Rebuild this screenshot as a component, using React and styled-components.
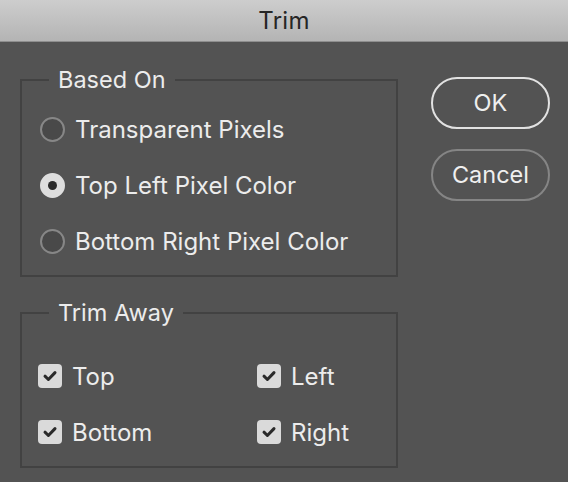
import React from "react";
import styled, { createGlobalStyle } from "styled-components";

const GlobalStyle = createGlobalStyle`
  html, body {
    margin: 0;
    padding: 0;
    background: #535353;
  }
  body {
    font-family: Inter, "Noto Sans", "Liberation Sans", sans-serif;
    color: #ececec;
  }
`;

const Dialog = styled.div`
  width: 568px;
  height: 482px;
  background: #535353;
  overflow: hidden;
`;

const TitleBar = styled.div`
  height: 41px;
  display: flex;
  align-items: center;
  justify-content: center;
  background: linear-gradient(#cdcdcd, #b4b4b4);
  border-bottom: 1px solid #8e8e8e;
  color: #262626;
  font-size: 24px;
  letter-spacing: 0.3px;
`;

const Body = styled.div`
  display: flex;
  gap: 33px;
  padding: 26px 0 0 20px;
`;

const Column = styled.div`
  display: flex;
  flex-direction: column;
  gap: 24px;
  width: 378px;
`;

const Group = styled.fieldset`
  margin: 0;
  padding: 0 0 ${(p) => p.$bottom || 6}px 18px;
  border: 2px solid #424242;
  min-width: 0;
`;

const Legend = styled.legend`
  margin-left: 9px;
  padding: 0 9px;
  font-size: 23.5px;
  line-height: 24px;
  color: #ececec;
`;

const Options = styled.div`
  padding-top: 9px;
`;

const Row = styled.label`
  display: flex;
  align-items: center;
  gap: 10px;
  height: 56px;
  font-size: 24px;
  white-space: nowrap;
`;

const Radio = styled.span`
  box-sizing: border-box;
  flex: none;
  width: 25px;
  height: 25px;
  border-radius: 50%;
  display: flex;
  align-items: center;
  justify-content: center;
  border: 2px solid ${(p) => (p.$on ? "#dedede" : "#878787")};
  background: ${(p) => (p.$on ? "#dedede" : "#494949")};

  &::after {
    content: "";
    display: ${(p) => (p.$on ? "block" : "none")};
    width: 9px;
    height: 9px;
    border-radius: 50%;
    background: #2b2b2b;
  }
`;

const CheckGrid = styled.div`
  display: grid;
  grid-template-columns: 219px 1fr;
  padding-top: 23px;
  margin-left: -2px;
`;

const Box = styled.span`
  flex: none;
  width: 24px;
  height: 24px;
  border-radius: 4px;
  background: #dadada;
  display: flex;
  align-items: center;
  justify-content: center;
`;

const Buttons = styled.div`
  display: flex;
  flex-direction: column;
  gap: 20px;
  padding-top: 9px;
`;

const Button = styled.button`
  box-sizing: border-box;
  width: 119px;
  height: 52px;
  border-radius: 26px;
  background: transparent;
  border: 2px solid ${(p) => (p.$primary ? "#e2e2e2" : "#858585")};
  color: #efefef;
  font-family: inherit;
  font-size: 23.5px;
  padding: 0 0 2px;
`;

function Check() {
  return (
    <Box>
      <svg width="16" height="16" viewBox="0 0 16 16">
        <path
          d="M3 8.2 L6.4 11.5 L13 4.6"
          fill="none"
          stroke="#2a2a2a"
          strokeWidth="3"
          strokeLinecap="round"
          strokeLinejoin="round"
        />
      </svg>
    </Box>
  );
}

export default function App() {
  const based = ["Transparent Pixels", "Top Left Pixel Color", "Bottom Right Pixel Color"];
  const sides = ["Top", "Left", "Bottom", "Right"];

  return (
    <Dialog>
      <GlobalStyle />
      <TitleBar>Trim</TitleBar>
      <Body>
        <Column>
          <Group>
            <Legend>Based On</Legend>
            <Options>
              {based.map((label, i) => (
                <Row key={label}>
                  <Radio $on={i === 1} />
                  {label}
                </Row>
              ))}
            </Options>
          </Group>
          <Group $bottom={6}>
            <Legend>Trim Away</Legend>
            <CheckGrid>
              {sides.map((label) => (
                <Row key={label}>
                  <Check />
                  {label}
                </Row>
              ))}
            </CheckGrid>
          </Group>
        </Column>
        <Buttons>
          <Button $primary>OK</Button>
          <Button>Cancel</Button>
        </Buttons>
      </Body>
    </Dialog>
  );
}
